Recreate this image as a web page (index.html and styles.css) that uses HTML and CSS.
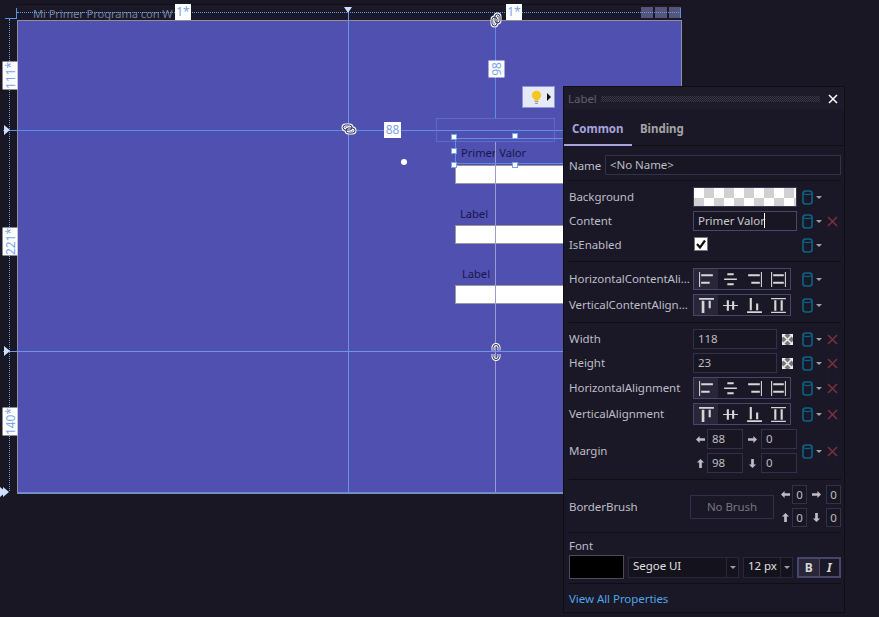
FILE: index.html
```html
<!DOCTYPE html>
<html lang="en">
<head>
  <meta charset="UTF-8" />
  <title>Mi Primer Programa con WPF - Designer</title>
  <link rel="stylesheet" href="styles.css">
</head>
<body>

  <svg class="defs" width="0" height="0">
    <symbol id="h-left" viewBox="0 0 16 14"><path d="M1 0h1v14H1zM3 2h11v2H3zM3 9h8v2H3z"/></symbol>
    <symbol id="h-center" viewBox="0 0 16 14"><path d="M5 1h6v2H5zM2 6h12v1.500H2zM5 10.500h6v2H5z"/></symbol>
    <symbol id="h-right" viewBox="0 0 16 14"><path d="M14 0h1v14h-1zM2 2h11v2H2zM5 9h8v2H5z"/></symbol>
    <symbol id="h-stretch" viewBox="0 0 16 14"><path d="M1 0h1v14H1zM14 0h1v14h-1zM3 2h10v2H3zM3 9h10v2H3z"/></symbol>
    <symbol id="v-top" viewBox="0 0 16 14"><path d="M1 0h14v1.500H1zM3.500 2.500h2.500V14H3.500zM10 2.500h2v7h-2z"/></symbol>
    <symbol id="v-center" viewBox="0 0 16 14"><path d="M1 6.500h14v1H1zM4.500 2h2v10h-2zM9.500 3h2v8h-2z"/></symbol>
    <symbol id="v-bottom" viewBox="0 0 16 14"><path d="M1 12.500h14V14H1zM3.500 0h2v11.500h-2zM9.500 5h2v6.500h-2z"/></symbol>
    <symbol id="v-stretch" viewBox="0 0 16 14"><path d="M1 0h14v1.200H1zM1 12.800h14V14H1zM4 2h2v10H4zM10 2h2v10h-2z"/></symbol>
    <symbol id="link" viewBox="0 0 16 12">
      <g fill="none" stroke="#fff" stroke-width="3"><rect x="2" y="2" width="9" height="5" rx="2.500"/><rect x="5" y="5" width="9" height="5" rx="2.500"/></g>
      <g fill="none" stroke="#23234f" stroke-width="1"><rect x="2" y="2" width="9" height="5" rx="2.500"/><rect x="5" y="5" width="9" height="5" rx="2.500"/></g>
    </symbol>
    <symbol id="broken" viewBox="0 0 10 18">
      <path d="M2 7.500V4.500a3 3 0 0 1 6 0v3M2 11v2.500a3 3 0 0 0 6 0V11" fill="none" stroke="#fff" stroke-width="3"/>
      <path d="M2 7.500V4.500a3 3 0 0 1 6 0v3M2 11v2.500a3 3 0 0 0 6 0V11" fill="none" stroke="#23234f" stroke-width="1"/>
    </symbol>
    <symbol id="arrow" viewBox="0 0 10 10"><path d="M0 5l4-4v2.500h6v3H4V9z"/></symbol>
    <symbol id="cyl" viewBox="0 0 11 15"><rect x="1" y="1" width="9" height="13" rx="2.500" fill="none" stroke="#0b6488" stroke-width="1.600"/><path d="M1 3.500c2 1.400 7 1.400 9 0" fill="none" stroke="#0b6488" stroke-width="1.200"/></symbol>
    <symbol id="cross" viewBox="0 0 11 11"><path d="M1 1l9 9M10 1l-9 9" fill="none" stroke="#7c3040" stroke-width="1.500"/></symbol>
    <symbol id="expand" viewBox="0 0 11 11"><rect width="11" height="11" fill="#77777c"/><path d="M0 0h4L0 4zM11 0v4L7 0zM11 11H7l4-4zM0 11V7l4 4z" fill="#eee"/><path d="M1 1l9 9M10 1l-9 9" stroke="#eee" stroke-width="1.500"/></symbol>
  </svg>

  <main class="designer">
    <div class="title-bar">
      <span class="title-text">Mi Primer Programa con W</span>
      <div class="chrome-btns">
        <span class="chrome-btn"></span>
        <span class="chrome-btn"></span>
        <span class="chrome-btn"></span>
      </div>
    </div>
    <div class="form"></div>

    <div class="tbox tbox-1"></div>
    <div class="tbox tbox-2"></div>
    <div class="tbox tbox-3"></div>
    <span class="lbl lbl-1">Primer Valor</span>
    <span class="lbl lbl-2">Label</span>
    <span class="lbl lbl-3">Label</span>

    <i class="guide dotted-h"></i>
    <i class="guide dotted-v"></i>
    <i class="guide corner"></i>
    <i class="guide row-1"></i>
    <i class="guide row-2"></i>
    <i class="guide col-1"></i>
    <i class="guide col-2a"></i>
    <i class="guide col-2b"></i>
    <i class="guide form-edge"></i>
    <i class="guide chrome-edge"></i>

    <i class="tri tri-down"></i>
    <i class="tri tri-r1"></i>
    <i class="tri tri-r2"></i>
    <i class="tri tri-r3"></i>
    <i class="tri tri-r4"></i>

    <span class="tag tag-col1">1*</span>
    <span class="tag tag-col2">1*</span>
    <span class="tag tag-v tag-r1">111*</span>
    <span class="tag tag-v tag-r2">221*</span>
    <span class="tag tag-v tag-r3">140*</span>
    <span class="tag tag-left">88</span>
    <span class="tag tag-v tag-top">98</span>

    <svg class="clip clip-a"><use href="#link"/></svg>
    <svg class="clip clip-b"><use href="#link"/></svg>
    <svg class="clip clip-c"><use href="#broken"/></svg>

    <div class="sel-ghost"></div>
    <div class="sel-box"></div>
    <i class="handle h-1"></i>
    <i class="handle h-2"></i>
    <i class="handle h-3"></i>
    <i class="handle h-4"></i>
    <i class="handle h-5"></i>
    <i class="rotate-dot"></i>

    <div class="bulb-btn">
      <svg class="bulb" viewBox="0 0 12 15"><path d="M6 0a5 5 0 0 0-3 9c.6.500 1 1 1 2h4c0-1 .4-1.500 1-2a5 5 0 0 0-3-9z" fill="#f6c61e"/><path d="M4 12h4M4.500 14h3" stroke="#8a8a8a"/></svg>
      <i class="bulb-arrow"></i>
    </div>

    <aside class="panel">
      <header class="panel-head">
        <span class="panel-type">Label</span>
        <span class="grip"></span>
        <svg class="panel-close" viewBox="0 0 10 10"><path d="M1 1l8 8M9 1l-8 8" fill="none" stroke="#fff" stroke-width="1.500"/></svg>
      </header>
      <nav class="tabs">
        <span class="tab active">Common</span>
        <span class="tab">Binding</span>
      </nav>

      <section class="sec sec-name">
        <div class="name-row">
          <span class="name-label">Name</span>
          <div class="field name-field">&lt;No Name&gt;</div>
        </div>
      </section>

      <section class="sec">
        <div class="row h20">
          <span>Background</span>
          <div class="brush-swatch"></div>
          <div class="tools"><svg class="cyl"><use href="#cyl"/></svg><i class="drop"></i></div>
        </div>
        <div class="row h20">
          <span>Content</span>
          <div class="field content-field">Primer Valor<i class="caret"></i></div>
          <div class="tools"><svg class="cyl"><use href="#cyl"/></svg><i class="drop"></i><svg class="cross"><use href="#cross"/></svg></div>
        </div>
        <div class="row h20">
          <span>IsEnabled</span>
          <div class="check"><svg viewBox="0 0 12 12"><path d="M2 6l3 3.500L10 2.500" fill="none" stroke="#111" stroke-width="2.200"/></svg></div>
          <div class="tools"><svg class="cyl"><use href="#cyl"/></svg><i class="drop"></i></div>
        </div>
      </section>

      <section class="sec">
        <div class="row h22">
          <span>HorizontalContentAli...</span>
          <div class="seg">
            <span class="on"><svg><use href="#h-left"/></svg></span>
            <span><svg><use href="#h-center"/></svg></span>
            <span><svg><use href="#h-right"/></svg></span>
            <span><svg><use href="#h-stretch"/></svg></span>
          </div>
          <div class="tools"><svg class="cyl"><use href="#cyl"/></svg><i class="drop"></i></div>
        </div>
        <div class="row h22">
          <span>VerticalContentAlign...</span>
          <div class="seg">
            <span class="on"><svg><use href="#v-top"/></svg></span>
            <span><svg><use href="#v-center"/></svg></span>
            <span><svg><use href="#v-bottom"/></svg></span>
            <span><svg><use href="#v-stretch"/></svg></span>
          </div>
          <div class="tools"><svg class="cyl"><use href="#cyl"/></svg><i class="drop"></i></div>
        </div>
      </section>

      <section class="sec">
        <div class="row h20">
          <span>Width</span>
          <div class="size-wrap"><div class="field size-field">118</div><svg class="expand"><use href="#expand"/></svg></div>
          <div class="tools"><svg class="cyl"><use href="#cyl"/></svg><i class="drop"></i><svg class="cross"><use href="#cross"/></svg></div>
        </div>
        <div class="row h20">
          <span>Height</span>
          <div class="size-wrap"><div class="field size-field">23</div><svg class="expand"><use href="#expand"/></svg></div>
          <div class="tools"><svg class="cyl"><use href="#cyl"/></svg><i class="drop"></i><svg class="cross"><use href="#cross"/></svg></div>
        </div>
        <div class="row h22">
          <span>HorizontalAlignment</span>
          <div class="seg">
            <span class="on"><svg><use href="#h-left"/></svg></span>
            <span><svg><use href="#h-center"/></svg></span>
            <span><svg><use href="#h-right"/></svg></span>
            <span><svg><use href="#h-stretch"/></svg></span>
          </div>
          <div class="tools"><svg class="cyl"><use href="#cyl"/></svg><i class="drop"></i><svg class="cross"><use href="#cross"/></svg></div>
        </div>
        <div class="row h22">
          <span>VerticalAlignment</span>
          <div class="seg">
            <span class="on"><svg><use href="#v-top"/></svg></span>
            <span><svg><use href="#v-center"/></svg></span>
            <span><svg><use href="#v-bottom"/></svg></span>
            <span><svg><use href="#v-stretch"/></svg></span>
          </div>
          <div class="tools"><svg class="cyl"><use href="#cyl"/></svg><i class="drop"></i><svg class="cross"><use href="#cross"/></svg></div>
        </div>
        <div class="row h44">
          <span>Margin</span>
          <div class="margins">
            <svg class="arr"><use href="#arrow"/></svg><div class="field">88</div>
            <svg class="arr arr-r"><use href="#arrow"/></svg><div class="field">0</div>
            <svg class="arr arr-u"><use href="#arrow"/></svg><div class="field">98</div>
            <svg class="arr arr-d"><use href="#arrow"/></svg><div class="field">0</div>
          </div>
          <div class="tools"><svg class="cyl"><use href="#cyl"/></svg><i class="drop"></i><svg class="cross"><use href="#cross"/></svg></div>
        </div>
      </section>

      <section class="sec sec-border">
        <div class="border-row">
          <span class="border-label">BorderBrush</span>
          <div class="no-brush">No Brush</div>
          <div class="margins small">
            <svg class="arr"><use href="#arrow"/></svg><div class="field">0</div>
            <svg class="arr arr-r"><use href="#arrow"/></svg><div class="field">0</div>
            <svg class="arr arr-u"><use href="#arrow"/></svg><div class="field">0</div>
            <svg class="arr arr-d"><use href="#arrow"/></svg><div class="field">0</div>
          </div>
        </div>
      </section>

      <section class="sec sec-font">
        <span class="font-label">Font</span>
        <div class="font-row">
          <div class="font-color"></div>
          <div class="combo family"><span>Segoe UI</span><b><i class="drop"></i></b></div>
          <div class="combo fsize"><span>12 px</span><b><i class="drop"></i></b></div>
          <div class="bi"><span class="on bold">B</span><span class="ital">I</span></div>
        </div>
      </section>

      <a class="all-props" href="#">View All Properties</a>
    </aside>
  </main>

</body>
</html>
```

FILE: styles.css
```css
* {
  box-sizing: border-box;
}

html, body {
  margin: 0;
  height: 617px;
  overflow: hidden;
}

body {
  font-family: 'Noto Sans', 'Open Sans', sans-serif;
  font-size: 11.5px;
  letter-spacing: -0.05px;
  background-color: #191723;
  color: #bdbdc6;
}

.defs {
  position: absolute;
}

/* designer surface: everything here sits on a free canvas */
.designer {
  position: relative;
  width: 879px;
  height: 617px;
}

.title-bar {
  position: absolute;
  left: 17px;
  top: 4px;
  width: 664px;
  height: 16px;
  background-color: #1b1928;
  border-top: 1px solid #0f0e16;
}

.title-text {
  position: absolute;
  left: 16px;
  top: 0;
  font-size: 11.1px;
  white-space: nowrap;
  color: #77808f;
  line-height: 18px;
}

.chrome-btns {
  position: absolute;
  right: 0;
  top: 2px;
  display: flex;
  gap: 2px;
}

.chrome-btn {
  width: 12px;
  height: 11px;
  background-color: #55557a;
}

.form {
  position: absolute;
  left: 17px;
  top: 20px;
  width: 665px;
  height: 474px;
  background-color: #5050b0;
  border: 1px solid #8e8ea0;
}

.tbox {
  position: absolute;
  left: 455px;
  width: 120px;
  height: 19px;
  background-color: #fff;
  border: 1px solid #9a9a9a;
}

.tbox-1 { top: 165px; }
.tbox-2 { top: 225px; }
.tbox-3 { top: 285px; }

.lbl {
  position: absolute;
  color: #17174e;
  line-height: 16px;
  font-size: 11.2px;
}

.lbl-1 { left: 461px; top: 145px; }
.lbl-2 { left: 460px; top: 206px; }
.lbl-3 { left: 462px; top: 266px; }

.guide {
  position: absolute;
  display: block;
}

.dotted-h {
  left: 17px;
  top: 12px;
  width: 664px;
  border-top: 1px dotted #5c9cff;
}

.dotted-v {
  left: 9px;
  top: 19px;
  height: 472px;
  border-left: 1px dotted #5c9cff;
}

.corner {
  left: 5px;
  top: 8px;
  width: 12px;
  height: 11px;
  border-right: 1px solid #5c8fe8;
  border-bottom: 1px solid #5c8fe8;
}

.row-1, .row-2 {
  left: 3px;
  width: 570px;
  height: 1px;
  background-color: #5c8fe8;
}

.row-1 { top: 130px; }
.row-2 { top: 351px; background-color: #6f94ec; }

.col-1 {
  left: 348px;
  top: 10px;
  width: 1px;
  height: 484px;
  background-color: #6a94ea;
}

.col-2a, .col-2b {
  left: 495px;
  width: 1px;
}

.col-2a {
  top: 20px;
  height: 98px;
  background-color: #5c8fe8;
}

.col-2b {
  top: 141px;
  height: 352px;
  background-color: #9a9acc;
}

.form-edge {
  left: 17px;
  top: 492px;
  width: 546px;
  height: 1px;
  background-color: #5c8fe8;
}

.chrome-edge {
  left: 680px;
  top: 8px;
  width: 1px;
  height: 10px;
  background-color: #5c8fe8;
}

.tri {
  position: absolute;
  width: 0;
  height: 0;
  display: block;
}

.tri-down {
  left: 344px;
  top: 7px;
  border-left: 4px solid transparent;
  border-right: 4px solid transparent;
  border-top: 6px solid #cfe0ff;
}

.tri-r1, .tri-r2, .tri-r3, .tri-r4 {
  border-top: 5px solid transparent;
  border-bottom: 5px solid transparent;
  border-left: 6px solid #cfe0ff;
}

.tri-r1 { left: 4px; top: 125px; }
.tri-r2 { left: 4px; top: 346px; }
.tri-r3 { left: 0; top: 487px; }
.tri-r4 { left: 3px; top: 487px; }

.tag {
  position: absolute;
  background-color: #fff;
  color: #7ba4ee;
  font-size: 12px;
  line-height: 16px;
  text-align: center;
}

.tag-col1 { left: 175px; top: 4px; width: 16px; height: 16px; }
.tag-col2 { left: 506px; top: 4px; width: 16px; height: 16px; }
.tag-left { left: 384px; top: 122px; width: 17px; height: 16px; }

.tag-v {
  height: 15px;
  line-height: 15px;
  transform: rotate(-90deg);
}

.tag-r1 { left: -4px; top: 68px; width: 28px; }
.tag-r2 { left: -4px; top: 234px; width: 28px; }
.tag-r3 { left: -4px; top: 414px; width: 28px; }
.tag-top { left: 488px; top: 61px; width: 17px; height: 16px; line-height: 16px; }

.clip {
  position: absolute;
}

.clip-a {
  left: 488px;
  top: 14px;
  width: 16px;
  height: 12px;
  transform: rotate(90deg);
}

.clip-b {
  left: 341px;
  top: 123px;
  width: 16px;
  height: 12px;
}

.clip-c {
  left: 491px;
  top: 343px;
  width: 10px;
  height: 18px;
}

.sel-ghost {
  position: absolute;
  left: 436px;
  top: 118px;
  width: 119px;
  height: 24px;
  border: 1px solid #6068cc;
}

.sel-box {
  position: absolute;
  left: 455px;
  top: 138px;
  width: 120px;
  height: 26px;
  border: 1px solid #5c8fe8;
}

.handle {
  position: absolute;
  width: 6px;
  height: 6px;
  background-color: #fff;
  border: 1px solid #7aa0f0;
}

.h-1 { left: 451px; top: 134px; }
.h-2 { left: 512px; top: 133px; }
.h-3 { left: 451px; top: 148px; }
.h-4 { left: 451px; top: 162px; }
.h-5 { left: 512px; top: 162px; }

.rotate-dot {
  position: absolute;
  left: 401px;
  top: 159px;
  width: 6px;
  height: 6px;
  border-radius: 50%;
  background-color: #fff;
}

.bulb-btn {
  position: absolute;
  left: 522px;
  top: 86px;
  width: 33px;
  height: 22px;
  display: flex;
  align-items: center;
  padding-left: 8px;
  gap: 5px;
  background-color: #e6eaf8;
  border: 1px solid #8f97d0;
}

.bulb {
  width: 11px;
  height: 15px;
}

.bulb-arrow {
  width: 0;
  height: 0;
  border-top: 4px solid transparent;
  border-bottom: 4px solid transparent;
  border-left: 4px solid #111;
}

/* property panel */
.panel {
  position: absolute;
  left: 563px;
  top: 86px;
  width: 282px;
  height: 527px;
  background-color: #1a1826;
  border: 1px solid #0f0e15;
  display: flex;
  flex-direction: column;
}

.panel-head {
  height: 23px;
  flex: none;
  display: flex;
  align-items: center;
  padding: 0 6px 0 4px;
  gap: 4px;
  background-color: #1d1b29;
}

.panel-type {
  color: #605e70;
}

.grip {
  flex: 1;
  height: 6px;
  margin-right: 4px;
  background-image: conic-gradient(#3a3848 25%, transparent 0 50%, #3a3848 0 75%, transparent 0);
  background-size: 2px 2px;
}

.panel-close {
  width: 10px;
  height: 10px;
}

.tabs {
  height: 36px;
  flex: none;
  display: flex;
  border-bottom: 1px solid #0f0e15;
}

.tab {
  padding: 0 8px;
  line-height: 37px;
  font-weight: 700;
  color: #a4a4a8;
}

.tab.active {
  color: #a6a3de;
  border-bottom: 2px solid #a6a3de;
  margin-bottom: -1px;
  width: 68px;
}

.sec {
  flex: none;
  display: flex;
  flex-direction: column;
  gap: 4px;
  margin: 0 3px 0 5px;
  padding: 6px 0;
  border-bottom: 1px solid #0f0e15;
}

.sec-name {
  padding: 10px 0 6px;
}

.name-row {
  display: flex;
  align-items: center;
  height: 18px;
}

.name-label {
  width: 36px;
}

.name-field {
  flex: 1;
  height: 18px;
  padding-left: 5px;
}

.row {
  display: grid;
  grid-template-columns: 124px 109px 39px;
  align-items: center;
}

.row > span {
  padding-bottom: 2px;
}

.h20 { height: 20px; }
.h22 { height: 22px; }
.h44 { height: 44px; }

.field {
  background-color: #181622;
  border: 1px solid #33314a;
  color: #bdbdc6;
  padding: 0 4px 2px;
  display: flex;
  align-items: center;
  height: 20px;
}

.brush-swatch {
  width: 104px;
  height: 20px;
  border: 1px solid #3a3850;
  background-color: #fff;
  background-image: conic-gradient(#d0d0d0 25%, #fff 0 50%, #d0d0d0 0 75%, #fff 0);
  background-size: 20px 20px;
}

.content-field {
  width: 104px;
  color: #c8c8d0;
  border-color: #48466a;
}

.caret {
  width: 1px;
  height: 15px;
  background-color: #fff;
  margin-left: -1px;
}

.check {
  width: 14px;
  height: 14px;
  margin: -3px 0 0 1px;
  background-color: #fff;
  border: 1px solid #777;
  display: flex;
}

.tools {
  display: flex;
  align-items: center;
}

.cyl {
  width: 11px;
  height: 15px;
}

.drop {
  display: block;
  width: 0;
  height: 0;
  margin-left: 3px;
  border-left: 3px solid transparent;
  border-right: 3px solid transparent;
  border-top: 3px solid #a0a0a8;
}

.cross {
  width: 11px;
  height: 11px;
  margin-left: 5px;
}

.seg {
  width: 98px;
  height: 22px;
  display: grid;
  grid-template-columns: repeat(4, 1fr);
  border: 1px solid #48466a;
}

.seg span {
  display: flex;
  align-items: center;
  justify-content: center;
}

.seg .on {
  background-color: #282638;
}

.seg svg {
  width: 17px;
  height: 15px;
  fill: #d6d6d6;
}

.size-wrap {
  display: flex;
  align-items: center;
}

.size-field {
  width: 84px;
}

.expand {
  width: 11px;
  height: 11px;
  margin-left: 5px;
}

.margins {
  display: grid;
  grid-template-columns: 14px 36px 18px 36px;
  grid-auto-rows: 20px;
  row-gap: 4px;
  align-items: center;
}

.arr {
  width: 9px;
  height: 9px;
  fill: #bdbdc6;
  justify-self: center;
}

.arr-r { transform: rotate(180deg); }
.arr-u { transform: rotate(90deg); }
.arr-d { transform: rotate(-90deg); }

.border-row {
  display: flex;
  align-items: center;
  height: 42px;
}

.sec-border {
  padding: 5px 0;
}

.border-label {
  width: 121px;
}

.no-brush {
  width: 84px;
  height: 24px;
  margin-top: 2px;
  line-height: 22px;
  text-align: center;
  border: 1px solid #33314a;
  color: #77767f;
}

.margins.small {
  margin-left: 4px;
  grid-template-columns: 14px 15px 19px 15px;
  grid-auto-rows: 19px;
}

.margins.small .field {
  justify-content: center;
  height: 19px;
  padding: 0;
}

.sec-font {
  gap: 0;
  padding: 4px 0 3px;
  height: 51px;
}

.font-label {
  line-height: 18px;
}

.font-row {
  display: flex;
  align-items: center;
  gap: 4px;
}

.font-color {
  width: 55px;
  height: 24px;
  background-color: #000;
  border: 1px solid #4c4c58;
}

.combo {
  height: 21px;
  display: flex;
  align-items: center;
  background-color: #14121c;
  border: 1px solid #2a2838;
  color: #e0e0e4;
}

.combo span {
  flex: 1;
  padding: 0 0 3px 4px;
}

.combo b {
  width: 12px;
  height: 100%;
  display: flex;
  align-items: center;
  border-left: 1px solid #2a2838;
}

.family { width: 111px; }
.fsize { width: 50px; }

.bi {
  width: 44px;
  height: 21px;
  display: grid;
  grid-template-columns: 1fr 1fr;
  gap: 1px;
  background-color: #48466a;
  border: 2px solid #48466a;
  color: #d6d6d6;
  text-align: center;
  font-size: 12px;
  line-height: 17px;
}

.bi span {
  background-color: #1a1826;
}

.bi .on {
  background-color: #282638;
}

.bold { font-weight: 700; }
.ital { font-style: italic; font-weight: 700; }

.all-props {
  margin: 7px 0 0 5px;
  color: #4fa6e8;
  text-decoration: none;
}
```
